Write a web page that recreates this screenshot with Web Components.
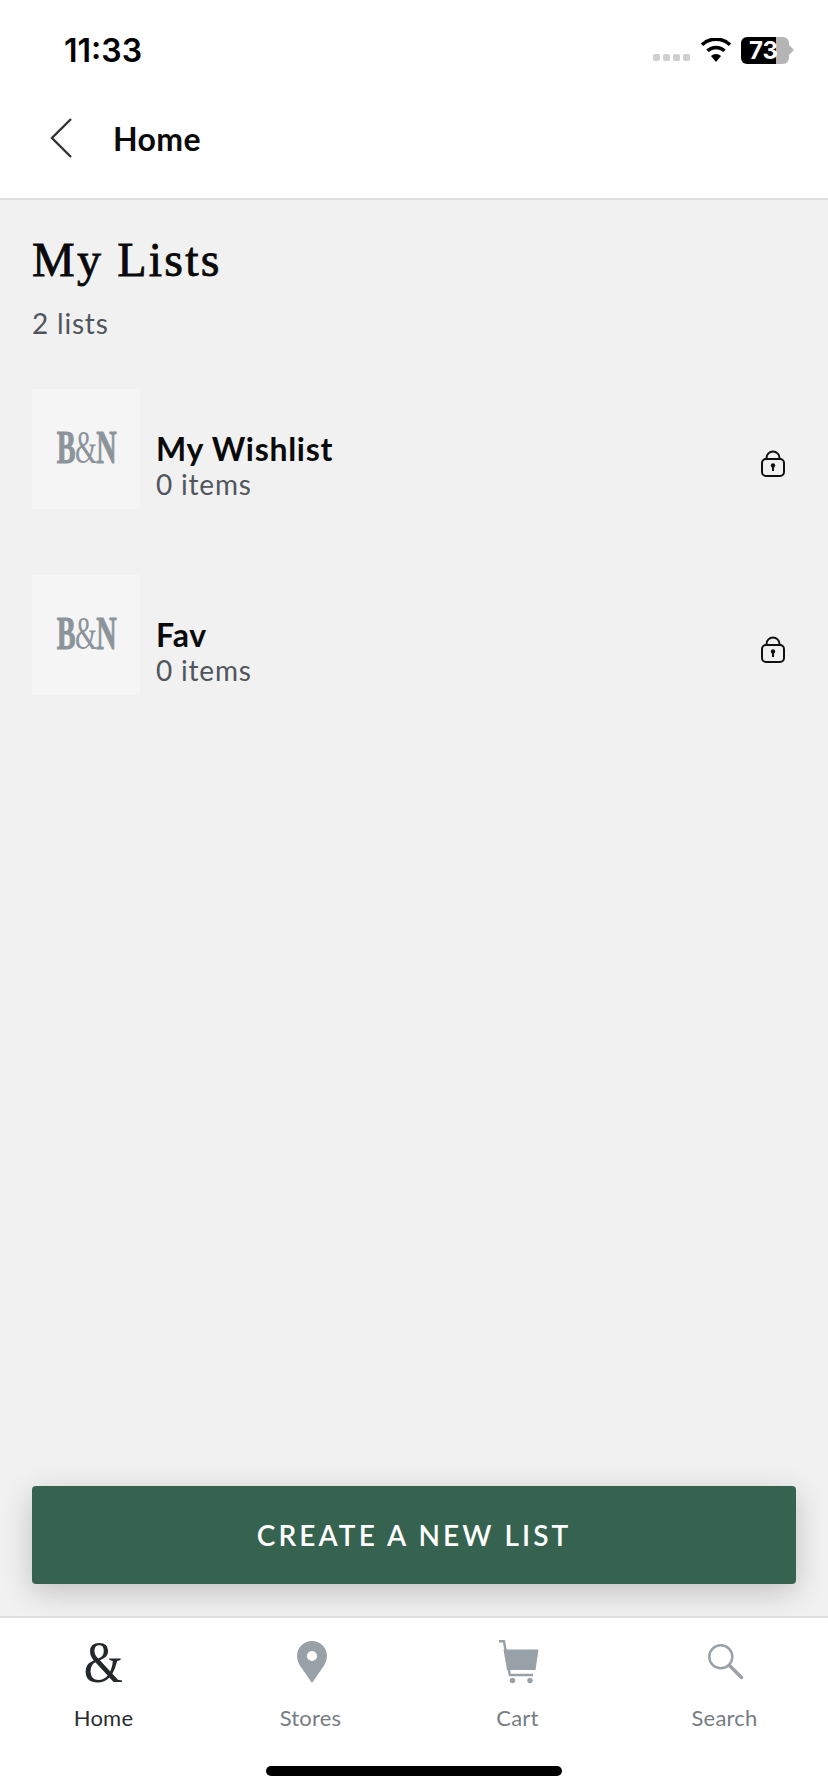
<!DOCTYPE html>
<html>
<head>
<meta charset="utf-8">
<title>My Lists</title>
<style>
    html, body { margin: 0; padding: 0; }
    body {
        width: 828px;
        height: 1792px;
        display: flex;
        flex-direction: column;
        overflow: hidden;
        background: #f1f1f2;
        font-family: Lato, sans-serif;
    }
</style>
</head>
<body>
    <status-bar time="11:33" battery="73"></status-bar>
    <nav-header label="Home"></nav-header>
    <lists-page heading="My Lists" count="2 lists">
        <list-row name="My Wishlist" items="0 items"></list-row>
        <list-row name="Fav" items="0 items"></list-row>
    </lists-page>
    <action-button label="CREATE A NEW LIST"></action-button>
    <tab-bar>
        <tab-item label="Home" active>
            <span style="font: 60px/44px 'Liberation Serif', serif; transform: scaleX(0.84)">&amp;</span>
        </tab-item>
        <tab-item label="Stores">
            <svg style="margin-left: 2px" width="30" height="42" viewBox="0 0 30 42">
                <path fill="#98a0a8" fill-rule="evenodd" d="M15 0C6.7 0 0 6.7 0 15c0 4 1.6 7.4 3.6 10.6L15 42l11.4-16.4C28.400 22.400 30 19 30 15 30 6.700 23.300 0 15 0zm0 10a5 5 0 1 1 0 10 5 5 0 0 1 0-10z"/>
            </svg>
        </tab-item>
        <tab-item label="Cart">
            <svg style="margin-left: 3px" width="40" height="44" viewBox="0 0 40 44">
                <path fill="none" stroke="#98a0a8" stroke-width="2.4" d="M0 1.200h5L10.800 35H34"/>
                <path fill="#98a0a8" d="M4.500 9.500H39.500L36.500 30H8z"/>
                <circle cx="13.500" cy="40.500" r="2.700" fill="#98a0a8"/>
                <circle cx="31" cy="40.500" r="2.700" fill="#98a0a8"/>
            </svg>
        </tab-item>
        <tab-item label="Search">
            <svg style="margin-left: 3px" width="36" height="36" viewBox="0 0 36 36">
                <circle cx="12.800" cy="12.800" r="11.500" fill="none" stroke="#9aa2a8" stroke-width="2.500"/>
                <path d="M21.500 21.500L33.500 33.500" stroke="#9aa2a8" stroke-width="3.500" stroke-linecap="round"/>
            </svg>
        </tab-item>
    </tab-bar>

<script>
class StatusBar extends HTMLElement {
    constructor() {
        super();
        this.attachShadow({ mode: "open" });
    }

    connectedCallback() {
        this.shadowRoot.innerHTML = `
            <style>
                :host {
                    display: flex;
                    flex: none;
                    height: 88px;
                    align-items: center;
                    padding: 12px 34px 0 64px;
                    background: #fff;
                    box-sizing: border-box;
                }
                .time {
                    font: 600 32px/40px Inter, sans-serif;
                    color: #000;
                    flex: 1;
                    margin-bottom: -1px;
                }
                .dots { display: flex; gap: 3px; margin: 14px 10px 0 0; }
                .dots i { width: 7px; height: 7px; border-radius: 2px; background: #cfcfcf; }
                .battery {
                    display: flex;
                    align-items: center;
                    margin-left: 9px;
                }
                .cell {
                    width: 48px;
                    height: 27px;
                    border-radius: 6px;
                    background: linear-gradient(to right, #000 73%, #b5b5b5 73%);
                    color: #fff;
                    font: 700 24px/27px Inter, sans-serif;
                    text-align: center;
                    overflow: hidden;
                    padding-right: 3px;
                    box-sizing: border-box;
                }
                .nib { width: 5px; height: 10px; background: #b5b5b5; clip-path: polygon(0 0, 100% 50%, 0 100%); }
            </style>
            <div class="time">${this.getAttribute("time")}</div>
            <div class="dots"><i></i><i></i><i></i><i></i></div>
            <svg width="32" height="24" viewBox="0 0 32 24">
                <path d="M16 24l-5-6a7.500 7.500 0 0 1 10 0z"/>
                <path fill="none" stroke="#000" stroke-width="3.600" d="M7.500 12.800a12.500 12.500 0 0 1 17 0M2 6.700a20.500 20.500 0 0 1 28 0"/>
            </svg>
            <div class="battery">
                <div class="cell">${this.getAttribute("battery")}</div>
                <div class="nib"></div>
            </div>
        `;
    }
}

class NavHeader extends HTMLElement {
    constructor() {
        super();
        this.attachShadow({ mode: "open" });
    }

    connectedCallback() {
        this.shadowRoot.innerHTML = `
            <style>
                :host {
                    display: flex;
                    flex: none;
                    align-items: center;
                    height: 112px;
                    padding: 0 0 10px 50px;
                    gap: 41px;
                    box-sizing: border-box;
                    background: #fff;
                    border-bottom: 2px solid #dfdfdf;
                }
                span {
                    font: 700 32px/40px Lato, sans-serif;
                    letter-spacing: 0.400px;
                    margin-top: 2px;
                    color: #0a0a0a;
                }
            </style>
            <svg width="22" height="40" viewBox="0 0 22 40">
                <path d="M21 1L2 20l19 19" fill="none" stroke="#333" stroke-width="2.400"/>
            </svg>
            <span>${this.getAttribute("label")}</span>
        `;
    }
}

class ListsPage extends HTMLElement {
    constructor() {
        super();
        this.attachShadow({ mode: "open" });
    }

    connectedCallback() {
        this.shadowRoot.innerHTML = `
            <style>
                :host {
                    display: flex;
                    flex-direction: column;
                    flex: 1;
                    padding: 32px 32px 0;
                    box-sizing: border-box;
                }
                h1 {
                    margin: 0;
                    font: 400 48px/56px "Liberation Serif", serif;
                    letter-spacing: 2.200px;
                    -webkit-text-stroke: 0.800px #0a0a0a;
                    color: #0a0a0a;
                }
                p {
                    margin: 18px 0 0;
                    font: 400 28px/34px Lato, sans-serif;
                    letter-spacing: 0.800px;
                    color: #50565c;
                }
                .rows {
                    display: flex;
                    flex-direction: column;
                    gap: 66px;
                    margin-top: 49px;
                }
            </style>
            <h1>${this.getAttribute("heading")}</h1>
            <p>${this.getAttribute("count")}</p>
            <div class="rows"><slot></slot></div>
        `;
    }
}

class ListRow extends HTMLElement {
    constructor() {
        super();
        this.attachShadow({ mode: "open" });
    }

    connectedCallback() {
        this.shadowRoot.innerHTML = `
            <style>
                :host {
                    display: flex;
                    align-items: flex-end;
                    height: 120px;
                }
                .thumb {
                    flex: none;
                    width: 108px;
                    height: 120px;
                    background: #f5f5f6;
                    display: flex;
                    align-items: center;
                    justify-content: center;
                    margin-right: 16px;
                }
                .logo {
                    font: 400 47px/60px "Liberation Serif", serif;
                    letter-spacing: -1px;
                    color: #8c949b;
                    transform: scaleX(0.6);
                    white-space: nowrap;
                    margin-top: -5px;
                }
                .logo b { font-weight: 700; -webkit-text-stroke: 1px #8c949b; }
                .text { flex: 1; padding-bottom: 8px; }
                .name {
                    font: 700 32px/36px Lato, sans-serif;
                    letter-spacing: 0.700px;
                    color: #0a0a0a;
                }
                .items {
                    font: 400 28px/34px Lato, sans-serif;
                    letter-spacing: 0.800px;
                    color: #50565c;
                }
                svg { flex: none; margin: 0 10px 31px 0; }
            </style>
            <div class="thumb"><div class="logo"><b>B</b>&amp;<b>N</b></div></div>
            <div class="text">
                <div class="name">${this.getAttribute("name")}</div>
                <div class="items">${this.getAttribute("items")}</div>
            </div>
            <svg width="26" height="28" viewBox="0 0 26 28" fill="none" stroke="#111" stroke-width="2">
                <rect x="2" y="9" width="22" height="17" rx="4"/>
                <path d="M6.500 9V8a6.500 6.500 0 0 1 13 0v1"/>
                <circle cx="13" cy="15.500" r="2.200" fill="#111" stroke="none"/>
                <path d="M13 16v5"/>
            </svg>
        `;
    }
}

class ActionButton extends HTMLElement {
    constructor() {
        super();
        this.attachShadow({ mode: "open" });
    }

    connectedCallback() {
        this.shadowRoot.innerHTML = `
            <style>
                :host {
                    display: block;
                    flex: none;
                    padding: 0 32px 32px;
                }
                button {
                    display: block;
                    width: 100%;
                    height: 98px;
                    border: 0;
                    border-radius: 4px;
                    background: #36634f;
                    color: #fff;
                    font: 600 28px/32px Lato, sans-serif;
                    letter-spacing: 3.100px;
                    box-shadow: 0 8px 30px rgba(0, 0, 0, 0.2);
                }
            </style>
            <button>${this.getAttribute("label")}</button>
        `;
    }
}

class TabBar extends HTMLElement {
    constructor() {
        super();
        this.attachShadow({ mode: "open" });
    }

    connectedCallback() {
        this.shadowRoot.innerHTML = `
            <style>
                :host {
                    display: flex;
                    flex-direction: column;
                    flex: none;
                    height: 176px;
                    box-sizing: border-box;
                    background: #fff;
                    border-top: 2px solid #dedede;
                }
                .tabs {
                    display: grid;
                    grid-template-columns: repeat(4, 1fr);
                    padding-top: 22px;
                }
                .home {
                    width: 296px;
                    height: 10px;
                    margin: 34px auto 0;
                    border-radius: 5px;
                    background: #000;
                }
            </style>
            <div class="tabs"><slot></slot></div>
            <div class="home"></div>
        `;
    }
}

class TabItem extends HTMLElement {
    constructor() {
        super();
        this.attachShadow({ mode: "open" });
    }

    connectedCallback() {
        const color = this.hasAttribute("active") ? "#2a2e31" : "#777d82";
        this.shadowRoot.innerHTML = `
            <style>
                :host {
                    display: flex;
                    flex-direction: column;
                    align-items: center;
                    color: #23282b;
                }
                .icon {
                    height: 44px;
                    display: flex;
                    align-items: center;
                    justify-content: center;
                }
                .label {
                    margin-top: 20px;
                    font: 400 22px/28px Lato, sans-serif;
                    letter-spacing: 0.200px;
                    color: ${color};
                }
            </style>
            <div class="icon"><slot></slot></div>
            <div class="label">${this.getAttribute("label")}</div>
        `;
    }
}

customElements.define("status-bar", StatusBar);
customElements.define("nav-header", NavHeader);
customElements.define("lists-page", ListsPage);
customElements.define("list-row", ListRow);
customElements.define("action-button", ActionButton);
customElements.define("tab-bar", TabBar);
customElements.define("tab-item", TabItem);
</script>
</body>
</html>
